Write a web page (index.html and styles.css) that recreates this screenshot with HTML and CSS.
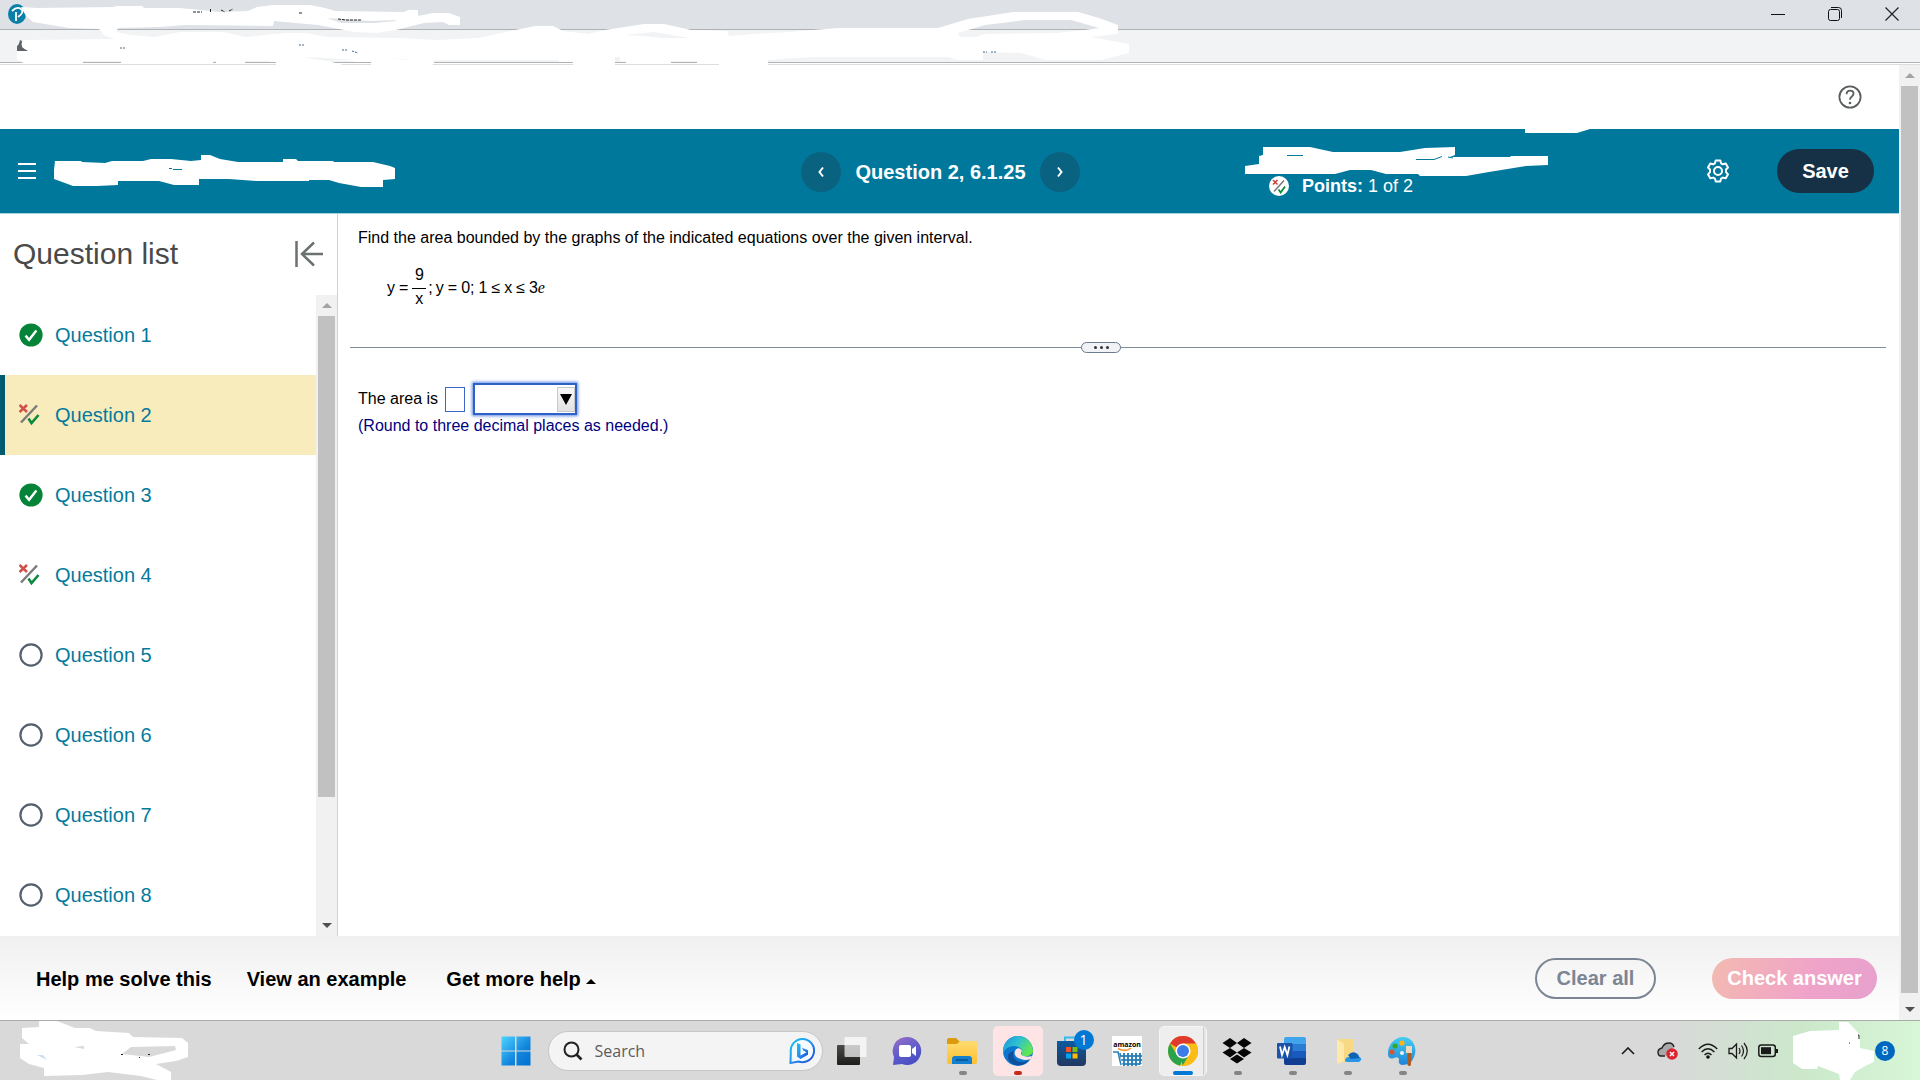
FILE: index.html
```html
<!DOCTYPE html>
<html lang="en">
<head>
<meta charset="utf-8">
<title>Question 2, 6.1.25</title>
<link rel="stylesheet" href="styles.css">
</head>
<body>
<svg width="0" height="0" class="defs" aria-hidden="true">
  <defs>
    <symbol id="i-done" viewBox="0 0 24 24"><circle cx="12" cy="12" r="11.6" fill="#048339"/><path d="M6.5 12.6l3.6 4.2L17.4 7.6" fill="none" stroke="#fff" stroke-width="2.4"/></symbol>
    <symbol id="i-open" viewBox="0 0 24 24"><circle cx="12" cy="12" r="10.6" fill="none" stroke="#55616f" stroke-width="2.2"/></symbol>
    <symbol id="i-part" viewBox="0 0 24 24"><path d="M.5 2l7.500 7M8 2L.5 9" stroke="#d0504b" stroke-width="2.600"/><path d="M2 19.500L18 2.500" stroke="#7a7a7a" stroke-width="2.400"/><path d="M9.500 15.500l3 4.500L19.500 12" fill="none" stroke="#0a8a3c" stroke-width="2.600"/></symbol>
    <linearGradient id="g-win" x2="1" y2="1"><stop stop-color="#4fd3ff"/><stop offset=".6" stop-color="#1185dc"/><stop offset="1" stop-color="#0070cf"/></linearGradient>
    <linearGradient id="g-bing" x2="1" y2="1"><stop stop-color="#16c8ee"/><stop offset=".5" stop-color="#2a8cf0"/><stop offset="1" stop-color="#1b48cf"/></linearGradient>
    <linearGradient id="g-chat" x2=".5" y2="1"><stop stop-color="#9a6fc4"/><stop offset=".6" stop-color="#5f5ccb"/><stop offset="1" stop-color="#4a4fc4"/></linearGradient>
    <linearGradient id="g-folder" x2="0" y2="1"><stop stop-color="#ffdc70"/><stop offset="1" stop-color="#fcc02f"/></linearGradient>
    <linearGradient id="g-edge" x1="0" y1="0" x2="1" y2=".5"><stop stop-color="#1e90d8"/><stop offset=".5" stop-color="#2cc0d4"/><stop offset="1" stop-color="#62e650"/></linearGradient>
    <linearGradient id="g-store" x2="0" y2="1"><stop stop-color="#0d5aa0"/><stop offset="1" stop-color="#21385f"/></linearGradient>
    <linearGradient id="g-dark" x2="0" y2="1"><stop stop-color="#4a4a48"/><stop offset="1" stop-color="#1d1d1c"/></linearGradient>
    <linearGradient id="g-paint" x2="0" y2="1"><stop stop-color="#45cdf2"/><stop offset="1" stop-color="#1d84da"/></linearGradient>
    <pattern id="p-weave" width="4" height="4" patternUnits="userSpaceOnUse"><rect width="4" height="4" fill="#2b7fb6"/><circle cx="2" cy="2" r="1.200" fill="#fff"/></pattern>
  </defs>
</svg>

<header class="window-bar">
  <div class="title-row">
    <svg class="favicon" viewBox="0 0 18 20"><ellipse cx="9" cy="10" rx="9" ry="10" fill="#0a80a8"/><path d="M4 7q5-5 9-2t-3 8M8 8v9" fill="none" stroke="#fff" stroke-width="1.800"/></svg>
    <div class="window-buttons">
      <button type="button" aria-label="Minimize"><svg width="14" height="14" viewBox="0 0 14 14"><path d="M0 7.500h14" stroke="#111"/></svg></button>
      <button type="button" aria-label="Restore"><svg width="14" height="14" viewBox="0 0 14 14"><rect x=".5" y="2.500" width="11" height="11" rx="2" fill="none" stroke="#111"/><path d="M3 .5h7.500a3 3 0 0 1 3 3V11" fill="none" stroke="#111"/></svg></button>
      <button type="button" aria-label="Close"><svg width="14" height="14" viewBox="0 0 14 14"><path d="M.5.5l13 13M13.500.5l-13 13" stroke="#222" stroke-width="1.200"/></svg></button>
    </div>
  </div>
  <div class="address-row"><svg width="12" height="12" viewBox="0 0 12 12"><path d="M0 6q2-1 3-6l2 1q-2 8 6 9v1H0z" fill="#5f6368"/></svg></div>
  <svg class="mask" width="1132" height="66" viewBox="0 0 1132 66" aria-hidden="true">
    <path fill="#fff" fill-rule="evenodd" d="M21 7L37 8 114 7 115 6H142L144 8 180 8 220 12 248 11 257 7 273 5H310L325 8 335 11 404 12 408 10H418V16L433 13H449L460 17V25H449L443 22 424 23 396 30 376 33 355 32 318 25 274 21 273 26 186 25 159 27 118 28 116 32 131 35 155 37 180 32H224L245 37 286 33H306L327 37 400 38 437 40 478 38 506 32 535 26H553L563 31 588 34 605 30 644 24H664L691 30 727 31 729 36 752 34 789 32 838 28H938L968 19 1013 12H1078L1099 18 1118 25V34L1091 37 1129 44V53L1101 60H1046L1021 53 983 52V60H958L948 57H813L768 60V66H719V64H697V61H671V64H626V62L620 61V57H615V66H573V62H559V60H435L432 66H371V62H354V61H328L347 66H276V62H270V61H245V64H216V61H213V64H121V61H83V64H26L17 60V51H28L22 47V42L24 40 114 39 104 35 99 29 69 28 33 22 26 16ZM327 18L342 23H375L395 21 396 20 370 21ZM958 33L985 25 1025 20H1071L1099 28 1085 30 1056 33 985 34 975 37H960ZM625 35L653 32 690 38H662L644 36ZM301 57L328 58 354 60 327 61ZM380 56L412 60H407Z"/>
    <path d="M193 12h9M221 10l4 2M229 11l4-2M299 13h4M338 19l8 1 16 0" stroke="#222" fill="none" stroke-dasharray="3 1"/>
    <path d="M210.500 9v3" stroke="#222"/>
    <path d="M120 48h5M299 45h6M342 50h6M352 51l6 2M983 52h4M991 52h5" stroke="#4b6a88" fill="none" stroke-dasharray="2 1"/>
  </svg>
</header>

<div class="viewport">
  <div class="page">
    <div class="help-row">
      <button type="button" class="plain" aria-label="Help"><svg width="24" height="24" viewBox="0 0 24 24"><circle cx="12" cy="12" r="10.600" fill="none" stroke="#5a5d5e" stroke-width="1.800"/><path d="M8.600 9.200q0-3.600 3.500-3.600t3.500 3q0 1.600-1.800 2.800T12 14.800" fill="none" stroke="#5a5d5e" stroke-width="1.800"/><circle cx="12" cy="18" r="1.300" fill="#5a5d5e"/></svg></button>
    </div>

    <div class="banner">
      <div class="banner-left">
        <button type="button" class="plain" aria-label="Menu"><svg width="18" height="18" viewBox="0 0 18 18"><path d="M0 2h18M0 9h18M0 16h18" stroke="#fff" stroke-width="2.200"/></svg></button>
        <svg width="341" height="32" viewBox="54 156 341 32" aria-hidden="true"><path fill="#fff" d="M55 162H81L82 163 105 164 112 162H143L151 160H171L191 162 201 161V156H210L220 160 238 163H283V160H296L298 162H333L334 163H373L390 167 395 169V180L383 181V188H361L339 184 329 181H309V182H257L229 180H199V186H174L159 182H118V186L97 187H73L65 184 54 180V171Z"/><path d="M169 169.500h3M173 170.500h9" stroke="#00789c"/></svg>
      </div>
      <nav class="stepper" aria-label="Question">
        <button type="button" class="round" aria-label="Previous"><svg width="8" height="12" viewBox="0 0 8 12"><path d="M6 1.500L2.500 6 6 10.500" fill="none" stroke="#fff" stroke-width="2"/></svg></button>
        <h1>Question 2, 6.1.25</h1>
        <button type="button" class="round" aria-label="Next"><svg width="8" height="12" viewBox="0 0 8 12"><path d="M2 1.500L5.500 6 2 10.500" fill="none" stroke="#fff" stroke-width="2"/></svg></button>
      </nav>
      <div class="banner-right">
        <div class="score">
          <svg width="303" height="29" viewBox="1245 145 303 29" aria-hidden="true"><path fill="#fff" d="M1263 145H1310L1333 150H1400L1425 146 1455 145V153L1450 155H1510L1511 154H1548V163L1526 164 1489 170 1466 174H1420L1418 172H1386L1371 168H1350L1335 172H1245V164L1259 162V154L1263 153Z"/><path d="M1287 153.500h16M1416 157.500h18l8-3M1448 155l5 1" fill="none" stroke="#00789c"/></svg>
          <div class="points">
            <svg width="20" height="20" viewBox="0 0 20 20"><circle cx="10" cy="10" r="10" fill="#fff"/><path d="M4 4l4.500 4.500M8.500 4L4 8.500" stroke="#d0403b" stroke-width="1.600"/><path d="M5 15.500L15 4.500" stroke="#777" stroke-width="1.500"/><path d="M9.500 13.500l2.200 3L16 10.500" fill="none" stroke="#0a8a3c" stroke-width="1.800"/></svg>
            <span><b>Points:</b> 1 of 2</span>
          </div>
        </div>
        <button type="button" class="plain gear" aria-label="Settings"><svg width="24" height="24" viewBox="0 0 24 24"><path d="M9.700 1.500h4.600l.8 2.800 1.700 1 2.900-.8 2.300 4-2 2v2.600l2 2.200-2.300 4-2.900-.7-1.700 1-.8 2.900H9.700l-.8-2.900-1.700-1-2.900.7-2.300-4 2-2.200v-2.600l-2-2 2.300-4 2.900.8 1.700-1z" fill="none" stroke="#fff" stroke-width="2" stroke-linejoin="round"/><circle cx="12" cy="12" r="4" fill="none" stroke="#fff" stroke-width="2"/></svg></button>
        <button type="button" class="save">Save</button>
      </div>
      <svg class="mask drip" width="65" height="4" viewBox="0 0 65 4" aria-hidden="true"><path fill="#fff" d="M0 0h65l-13 4H0z"/></svg>
    </div>

    <div class="main">
      <aside class="sidebar">
        <div class="sidebar-head">
          <h2>Question list</h2>
          <button type="button" class="plain" aria-label="Collapse list"><svg width="28" height="26" viewBox="0 0 28 26"><path d="M1.500 0v26M28 13H8M19 1.500L7 13l12 11.500" fill="none" stroke="#6b7070" stroke-width="2.500"/></svg></button>
        </div>
        <div class="list-wrap">
          <ul class="questions">
            <li><a href="#q1"><svg class="mark"><use href="#i-done"/></svg>Question 1</a></li>
            <li class="current"><a href="#q2"><svg class="mark"><use href="#i-part"/></svg>Question 2</a></li>
            <li><a href="#q3"><svg class="mark"><use href="#i-done"/></svg>Question 3</a></li>
            <li><a href="#q4"><svg class="mark"><use href="#i-part"/></svg>Question 4</a></li>
            <li><a href="#q5"><svg class="mark"><use href="#i-open"/></svg>Question 5</a></li>
            <li><a href="#q6"><svg class="mark"><use href="#i-open"/></svg>Question 6</a></li>
            <li><a href="#q7"><svg class="mark"><use href="#i-open"/></svg>Question 7</a></li>
            <li><a href="#q8"><svg class="mark"><use href="#i-open"/></svg>Question 8</a></li>
          </ul>
          <div class="scrollbar"><i class="up"></i><div class="track"><div class="thumb list-thumb"></div></div><i class="down"></i></div>
        </div>
      </aside>

      <section class="work">
        <div class="prompt">
          <p>Find the area bounded by the graphs of the indicated equations over the given interval.</p>
          <div class="equation"><span>y</span><span>=</span><span class="fraction"><span>9</span><span>x</span></span><span class="semi">;</span><span>y</span><span>=</span><span>0;</span><span>1</span><span>≤</span><span>x</span><span>≤</span><span>3<em>e</em></span></div>
        </div>
        <div class="divider"><button type="button" aria-label="Resize panes"><i></i><i></i><i></i></button></div>
        <div class="answer">
          <div class="answer-line">
            <label for="area">The area is</label>
            <input id="area" type="text">
            <span class="unit"><select aria-label="Units"><option></option></select><span class="unit-arrow"><i></i></span></span>
          </div>
          <p class="hint">(Round to three decimal places as needed.)</p>
        </div>
      </section>
    </div>

    <footer class="actions">
      <button type="button" class="link">Help me solve this</button>
      <button type="button" class="link">View an example</button>
      <button type="button" class="link more">Get more help <i></i></button>
      <button type="button" class="pill clear">Clear all</button>
      <button type="button" class="pill check">Check answer</button>
    </footer>
  </div>
  <div class="scrollbar"><i class="up"></i><div class="track"><div class="thumb page-thumb"></div></div><i class="down"></i></div>
</div>

<div class="taskbar">
  <div class="task-left">
    <svg width="168" height="59" viewBox="20 1021 168 59" aria-hidden="true"><path fill="#fff" fill-rule="evenodd" d="M39 1021H57L75 1028H90L96 1031 129 1033 133 1037 182 1038 188 1043V1057L176 1061 156 1064 171 1072V1080H157L141 1076 108 1072 82 1075 44 1076V1068L29 1064 20 1058V1044H29L22 1038V1028L39 1027ZM122 1054L131 1047 175 1046 176 1050 149 1057ZM74 1047L84 1046V1049Z"/><path d="M37 1055l6 0 4 5z" fill="#c9ddf5"/><path d="M121 1054.500h2M148 1054.500h2M139 1057.500h1" stroke="#222"/></svg>
  </div>
  <div class="task-center">
    <button type="button" class="task" aria-label="Start"><svg width="30" height="30" viewBox="0 0 30 30"><path fill="url(#g-win)" d="M1 .5h13v14H.5V1zM15.500.5h14v14h-14zM.5 15.500H14v14H.5zM15.500 15.500h14v14h-14z"/></svg></button>
    <div class="search">
      <svg width="20" height="20" viewBox="0 0 20 20"><circle cx="8.500" cy="8.500" r="7" fill="none" stroke="#222" stroke-width="2"/><path d="M13.500 13.500l5 5" stroke="#222" stroke-width="2.600"/></svg>
      <input type="text" placeholder="Search" aria-label="Search">
      <svg width="26" height="26" viewBox="0 0 26 26"><path d="M13.500 1a11.600 11.600 0 1 1-4 22.500L1.500 25l.3-11A11.700 11.700 0 0 1 13.500 1z" fill="#f4fbff" stroke="url(#g-bing)" stroke-width="2"/><path d="M8 5l3.500 1.500v11l6-3.300-3-1.500-1.500-3 6 2.500v4.500L11.500 21 8 18.500z" fill="url(#g-bing)"/></svg>
    </div>
    <button type="button" class="task" aria-label="Task view"><svg width="30" height="30" viewBox="0 0 30 30"><rect y="9" width="23" height="20" rx="1" fill="url(#g-dark)"/><rect x="7.500" y="1" width="22" height="20" rx="1" fill="#fff" fill-opacity=".7"/></svg></button>
    <button type="button" class="task" aria-label="Chat"><svg width="30" height="30" viewBox="0 0 30 30"><path d="M15 1a14 14 0 1 1-5 27l-9 1 1-8A14 14 0 0 1 15 1z" fill="url(#g-chat)"/><rect x="7" y="9" width="12" height="12" rx="2" fill="#fff"/><path d="M20 13l4-3v10l-4-3z" fill="#fff"/></svg></button>
    <button type="button" class="task run" aria-label="File Explorer"><svg width="30" height="30" viewBox="0 0 30 30"><path d="M0 4q0-2 2-2h7l3 3h16q2 0 2 2v3H0z" fill="#dc9a0c"/><path d="M0 8h10l3-3h16q1 0 1 1v20q0 2-2 2H2q-2 0-2-2z" fill="url(#g-folder)"/><path d="M5 28v-5q0-3 3-3h14q3 0 3 3v5z" fill="#1280cf"/><path d="M9 24h12" stroke="#0b4f92" stroke-width="1.500"/></svg></button>
    <button type="button" class="task run edge" aria-label="Edge"><svg width="30" height="30" viewBox="0 0 30 30"><circle cx="15" cy="15" r="15" fill="#0b78cf"/><path d="M3 6A15 15 0 0 1 30 15c0 5-9 7-12 4 3-5-1-9-7-9-6 0-10 4-11 8 0-4 0-8 3-12z" fill="url(#g-edge)"/><path d="M11 15c-4 9 7 15 16 8-5 7-13 8-19 4-5-4-4-11 3-12z" fill="#104f9b"/><path d="M12.500 14q4-4 6.500 1-2 3 0 4.500 4 2 10 .5l-1 3q-6 2-10 0c-5-1-8-5-5.500-9z" fill="#ffe4e6"/></svg></button>
    <button type="button" class="task" aria-label="Store"><svg width="30" height="30" viewBox="0 0 30 30"><path d="M8 6V1.500h14V6" fill="none" stroke="#39b8ee" stroke-width="2"/><path d="M0 5h29v21q0 4-4 4H4q-4 0-4-4z" fill="url(#g-store)"/><path d="M9 11h5v5H9z" fill="#f05325"/><path d="M15.500 11h5v5h-5z" fill="#7eba11"/><path d="M9 17.500h5v5H9z" fill="#03a4ef"/><path d="M15.500 17.500h5v5h-5z" fill="#ffb901"/></svg><span class="badge">1</span></button>
    <button type="button" class="task" aria-label="Amazon"><span class="amazon"><b>amazon</b><svg width="30" height="18" viewBox="0 0 30 18"><path d="M6 .5q8 4 13-.5" fill="none" stroke="#f29a2e" stroke-width="1.500"/><path d="M1 4h5l3 13" fill="none" stroke="#2b7fb6" stroke-width="1.500"/><path d="M7 5h23v10q-2 3-6 3H11z" fill="url(#p-weave)"/></svg></span></button>
    <button type="button" class="task run chrome" aria-label="Chrome"><svg width="30" height="30" viewBox="0 0 30 30"><circle cx="15" cy="15" r="15" fill="#fbbc16"/><path d="M15 15L2 7.500A15 15 0 0 1 28 7.500z" fill="#e0392d"/><path d="M2 7.500L9 19l6 3-3 7.700A15 15 0 0 1 2 7.500z" fill="#2ba24c"/><path d="M15 30l6-11H9l4 5z" fill="#2ba24c"/><path d="M21 19l-6.500 11A15 15 0 0 0 28 7.500H15z" fill="#fbbc16"/><circle cx="15" cy="15" r="7.500" fill="#fff"/><circle cx="15" cy="15" r="6" fill="#3c7be8"/></svg></button>
    <button type="button" class="task run" aria-label="Dropbox"><svg width="30" height="30" viewBox="0 0 30 30"><path d="M8 2l7 5-7 5-7.500-5zM22 2l7.500 5-7.500 5-7-5zM8 12l7 4.500-7 5L.5 16.500zM22 12l7.500 4.500-7.500 5-7-5zM15 18.500l7 4.500-7 4.500L8 23z" fill="#060606"/></svg></button>
    <button type="button" class="task run" aria-label="Word"><svg width="30" height="30" viewBox="0 0 30 30"><path d="M7 3q0-2 2-2h18q2 0 2 2v5H7z" fill="#41a5ee"/><path d="M7 8h22v7H7z" fill="#2b7cd3"/><path d="M7 15h22v7H7z" fill="#185abd"/><path d="M7 22h22v5q0 2-2 2H9q-2 0-2-2z" fill="#103f91"/><rect y="7" width="15.500" height="15.500" rx="1" fill="#1a52ac"/><path d="M3 10.500l2 8.500 2.700-8 2.700 8 2-8.500" fill="none" stroke="#fff" stroke-width="1.800"/></svg></button>
    <button type="button" class="task run" aria-label="OneDrive folder"><svg width="30" height="30" viewBox="0 0 30 30"><path d="M5 3h16v23H5z" fill="#f7d983"/><path d="M5 3l7 5v17l-6 3-1-2z" fill="#ffe9a8"/><path d="M13 25q0-4 4-4 2-5 7-4 3 1 3 4 3 1 2 3-1 2-3 2H16q-3 0-3-1z" fill="#2796e8"/><path d="M16 19q5-5 9-1l3 4-9 1z" fill="#0f63b5"/></svg></button>
    <button type="button" class="task run" aria-label="Paint"><svg width="30" height="30" viewBox="0 0 30 30"><path d="M16 1C26 1 31 12 27 21q-3 8-12 8-4-1-3-5 0-4-5-2-5 2-6-3C0 9 8 1 16 1z" fill="url(#g-paint)"/><circle cx="15" cy="7" r="2.600" fill="#fbb316"/><circle cx="8" cy="10" r="2.600" fill="#35a72f"/><circle cx="5" cy="16" r="2.600" fill="#d8542b"/><circle cx="15" cy="17" r="2" fill="#e8f4fb"/><path d="M19 10h6v7h-6z" fill="#f0d9b8"/><path d="M20.500 17H24v12q-2 2-3.500 0z" fill="#a85b22"/></svg></button>
  </div>
  <div class="tray">
    <button type="button" class="plain" aria-label="Show hidden icons"><svg width="14" height="8" viewBox="0 0 14 8"><path d="M1 7l6-6 6 6" fill="none" stroke="#1a1a1a" stroke-width="1.600"/></svg></button>
    <svg class="cloud" width="21" height="18" viewBox="0 0 21 18"><path d="M8 14H4q-3 0-3-4 0-3 4-4 2-5 7-5 4 0 5 4" fill="#a8a8a8" stroke="#222" stroke-width="1.400"/><circle cx="15" cy="12" r="5.800" fill="#dc2330"/><path d="M13 10l4 4M17 10l-4 4" stroke="#fff" stroke-width="1.500"/></svg>
    <svg width="20" height="16" viewBox="0 0 20 16"><path d="M.8 6q9.200-9.500 18.400 0M3.600 9q6.400-6.500 12.800 0M6.500 12q3.500-3.500 7 0" fill="none" stroke="#1a1a1a" stroke-width="1.400"/><circle cx="10" cy="14" r="1.800" fill="#111"/></svg>
    <svg width="20" height="18" viewBox="0 0 20 18"><path d="M1 6.500h3l4.500-4.500v14L4 11.500H1z" fill="none" stroke="#1a1a1a" stroke-width="1.300"/><path d="M11 6q2 3 0 6M13.500 3.500q4 5.500 0 11M16 1q6.500 8 0 16" fill="none" stroke="#1a1a1a" stroke-width="1.200"/></svg>
    <svg width="20" height="14" viewBox="0 0 20 14"><rect x=".8" y="1" width="16.500" height="11.500" rx="2.500" fill="none" stroke="#1a1a1a" stroke-width="1.500"/><rect x="3" y="3.200" width="10" height="7" fill="#1a1a1a"/><path d="M18 5h2v4h-2z" fill="#1a1a1a"/></svg>
    <svg class="clock-mask" width="81" height="58" viewBox="1793 1022 81 58" aria-hidden="true"><path fill="#fff" d="M1839 1022H1848L1853 1027 1860 1035V1048L1874 1051V1062L1867 1065 1855 1072 1850 1080H1840L1839 1074 1818 1066 1817 1069H1802L1793 1063V1036L1810 1031 1839 1030Z"/><path d="M1858 1035h1v4M1849 1043h1" stroke="#222" fill="none"/></svg>
    <span class="count">8</span>
  </div>
</div>
</body>
</html>
```
FILE: styles.css
```css
* { box-sizing: border-box; }

body {
  margin: 0;
  min-height: 100vh;
  display: flex;
  flex-direction: column;
  background: #fff;
  color: #000;
  font-family: "Liberation Sans", Arial, sans-serif;
  font-size: 16px;
}

h1, h2, p, ul { margin: 0; padding: 0; }
svg { display: block; flex: none; }
button { font: inherit; cursor: pointer; }
.defs { position: absolute; }
.plain { border: 0; padding: 0; background: none; }
.mask { position: absolute; left: 0; top: 0; pointer-events: none; }

/* browser window frame */
.window-bar { position: relative; border-bottom: 1px solid #dcdddd; }
.title-row {
  height: 30px;
  display: flex;
  justify-content: space-between;
  align-items: center;
  padding: 0 0 2px 8px;
  background: #dee1e6;
  border-bottom: 1px solid #b0b3b5;
}
.favicon { width: 18px; height: 20px; }
.window-buttons { display: flex; }
.window-buttons button {
  width: 57px;
  display: flex;
  justify-content: center;
  border: 0;
  padding: 0;
  background: none;
}
.address-row {
  height: 33px;
  margin-bottom: 1px;
  padding: 10px 17px;
  background: #f1f3f4;
  border-bottom: 1px solid #b0b3b5;
}

/* page and scrollbars */
.viewport { flex: 1; display: flex; }
.page { flex: 1; min-width: 0; display: flex; flex-direction: column; }
.scrollbar {
  flex: none;
  width: 21px;
  display: flex;
  flex-direction: column;
  align-items: center;
  background: #f1f1f1;
}
.scrollbar .track { flex: 1; width: 17px; }
.scrollbar .thumb { background: #c1c1c1; }
.scrollbar .up, .scrollbar .down {
  height: 5px;
  margin: 8px 0;
  border: 5px solid transparent;
  border-top-width: 0;
  border-bottom-color: #a3a3a3;
}
.scrollbar .down {
  border-width: 5px 5px 0;
  border-color: #505050 transparent transparent;
}
.page-thumb { height: 907px; max-height: 100%; }
.list-thumb { height: 481px; }

.help-row {
  height: 64px;
  display: flex;
  align-items: center;
  justify-content: flex-end;
  padding-right: 37px;
}

.banner {
  position: relative;
  height: 85px;
  display: grid;
  grid-template-columns: 1fr auto 1fr;
  align-items: center;
  background: #00789c;
  border-bottom: 1px solid #a9cfdc;
  color: #fff;
}
.drip { left: auto; right: 309px; }
.banner-left { display: flex; align-items: center; gap: 18px; padding-left: 18px; }
.stepper { display: flex; align-items: center; justify-content: center; gap: 14px; padding: 2px 18px 0 0; }
.stepper h1 { font-size: 20px; line-height: 24px; }
.round {
  width: 40px;
  height: 40px;
  display: flex;
  align-items: center;
  justify-content: center;
  border: 0;
  border-radius: 50%;
  background: #0a6281;
}
.banner-right { display: flex; align-items: center; justify-content: flex-end; padding-right: 25px; }
.points {
  display: flex;
  align-items: center;
  gap: 13px;
  padding-left: 24px;
  font-size: 18px;
  line-height: 18px;
}
.gear { margin: 0 47px 0 158px; }
.save {
  width: 97px;
  height: 44px;
  border: 0;
  border-radius: 22px;
  background: #163145;
  color: #fff;
  font-size: 20px;
  font-weight: bold;
}

/* question list */
.main { flex: 1; display: flex; }
.sidebar {
  flex: none;
  width: 338px;
  display: flex;
  flex-direction: column;
  border-right: 1px solid #cfd0d8;
}
.sidebar-head {
  height: 81px;
  display: flex;
  align-items: center;
  justify-content: space-between;
  padding: 0 14px 2px 13px;
}
.sidebar-head h2 { font-size: 30px; font-weight: normal; line-height: 36px; color: #4a4a4a; }
.list-wrap { flex: 1; display: flex; }
.questions { flex: 1; list-style: none; }
.questions a {
  height: 80px;
  display: flex;
  align-items: center;
  gap: 12px;
  padding: 0 0 1px 19px;
  color: #047a9c;
  font-size: 20px;
  line-height: 24px;
  text-decoration: none;
}
.questions .current { background: #f8ebbc; }
.questions .current a { padding-left: 14px; border-left: 5px solid #005a70; }
.mark { width: 24px; height: 24px; }

/* work area */
.work { flex: 1; min-width: 0; padding: 0 13px 0 12px; }
.prompt { height: 128px; padding: 14px 8px 0; }
.prompt p { line-height: 20px; }
.equation { display: flex; align-items: center; gap: 4px; padding: 17px 0 0 29px; line-height: 20px; }
.equation em { font-family: "Liberation Serif", "Times New Roman", serif; }
.fraction { width: 14px; text-align: center; }
.fraction span { display: block; height: 23px; }
.fraction span + span { border-top: 1px solid #000; }
.semi { margin: 0 -1px 0 -2px; }
.divider {
  height: 11px;
  display: flex;
  align-items: center;
  justify-content: center;
  background: linear-gradient(#7f8c9b, #7f8c9b) center / 100% 1px no-repeat;
}
.divider button {
  width: 40px;
  height: 11px;
  margin-left: -34px;
  display: flex;
  align-items: center;
  justify-content: center;
  gap: 3px;
  padding: 0;
  border: 1px solid #6b7a8f;
  border-radius: 6px;
  background: #f1f2f5;
}
.divider i { width: 3px; height: 3px; border-radius: 50%; background: #333; }
.answer { padding: 30px 8px 0; }
.answer-line { display: flex; align-items: center; line-height: 20px; }
.answer-line input {
  width: 20px;
  height: 25px;
  margin: 0 8px 0 7px;
  padding: 0;
  border: 1px solid #3a67c8;
  background: #fff;
  font: inherit;
}
.unit { position: relative; }
.unit select {
  appearance: none;
  display: block;
  width: 104px;
  height: 32px;
  padding: 0 20px 0 4px;
  border: 2px solid #2f62c9;
  border-radius: 0;
  background: #fff;
  box-shadow: 0 0 3px 1px #5d8ae0;
}
.unit-arrow {
  position: absolute;
  right: 2px;
  top: 4px;
  width: 18px;
  height: 25px;
  display: flex;
  justify-content: center;
  padding-top: 6px;
  border: 1px solid #c8c8c8;
  background: linear-gradient(#f8f8f8, #e2e2e2);
  pointer-events: none;
}
.unit-arrow i { height: 11px; border: 6px solid transparent; border-width: 11px 6px 0; border-top-color: #000; }
.hint { color: #000080; line-height: 22px; }

.actions {
  height: 84px;
  display: flex;
  align-items: center;
  padding: 0 22px 0 36px;
  background: linear-gradient(#f0f0f0, #fff);
  font-size: 20px;
  font-weight: bold;
}
.link { margin-right: 35px; padding: 2px 0 0; border: 0; background: none; line-height: 24px; }
.more { display: flex; align-items: center; gap: 5px; margin: 0 auto 0 5px; }
.more i { margin-top: 4px; border: 5px solid transparent; border-top: 0; border-bottom-color: #000; }
.pill { height: 41px; padding: 0; border: 0; border-radius: 21px; }
.clear { width: 121px; margin-right: 56px; border: 2px solid #7c8594; background: #fff0; color: #7c8594; }
.check { width: 165px; background: linear-gradient(110deg, #f3bab0, #f0a3c9 60%, #e6a1cd); color: #fff; }

/* desktop taskbar */
.taskbar {
  height: 60px;
  display: grid;
  grid-template-columns: 1fr auto 1fr;
  align-items: center;
  border-top: 1px solid #aaacaa;
  background: linear-gradient(90deg, #d9d9d9 0 87%, #cbe8cb 94%, #d8f7d7);
}
.task-left { padding-left: 20px; }
.task-center { display: flex; align-items: center; padding-right: 2px; }
.task {
  position: relative;
  width: 55px;
  height: 50px;
  display: flex;
  align-items: center;
  justify-content: center;
  padding: 0;
  border: 0;
  background: none;
}
.run::after {
  content: "";
  position: absolute;
  left: 24px;
  bottom: 1px;
  width: 8px;
  height: 4px;
  border-radius: 2px;
  background: #858585;
}
.edge { width: 50px; margin: 0 2px 0 3px; border-radius: 5px; background: #ffe4e6; }
.edge::after { left: 21px; background: #c42b1c; }
.chrome { width: 48px; margin: 0 3px 0 4px; border: 1px solid #f5f5f5; border-radius: 5px; background: linear-gradient(90deg, #eee 43px, #ccc 43px 44px, #e6e6e6 44px); }
.chrome::after { left: 13px; bottom: 0; width: 20px; background: #0078d4; }
.badge {
  position: absolute;
  right: 6px;
  top: 4px;
  width: 20px;
  height: 20px;
  border-radius: 50%;
  background: #0078d4;
  color: #fff;
  font: 14px/20px "Open Sans", sans-serif;
}
.amazon { width: 30px; height: 30px; background: #fff; }
.amazon b { display: block; height: 12px; font: bold 7px/18px "Open Sans", sans-serif; text-align: center; }
.search {
  width: 275px;
  height: 40px;
  margin: 0 2px 0 4px;
  display: flex;
  align-items: center;
  gap: 12px;
  padding: 0 7px 0 14px;
  border: 1px solid #c6c6c6;
  border-radius: 20px;
  background: #f4f4f4;
}
.search input {
  flex: 1;
  min-width: 0;
  padding: 0;
  border: 0;
  background: none;
  font: 16px/20px "Open Sans", sans-serif;
}
.search input::placeholder { color: #5c5c5c; opacity: 1; }
.tray { display: flex; align-items: center; justify-content: flex-end; gap: 10px; padding-right: 25px; }
.cloud { margin: 0 10px 0 12px; }
.clock-mask { margin-left: 5px; }
.count {
  width: 20px;
  height: 20px;
  margin-left: -9px;
  border-radius: 50%;
  background: #0067c0;
  color: #fff;
  font: 12px/20px "Open Sans", sans-serif;
  text-align: center;
}
```
